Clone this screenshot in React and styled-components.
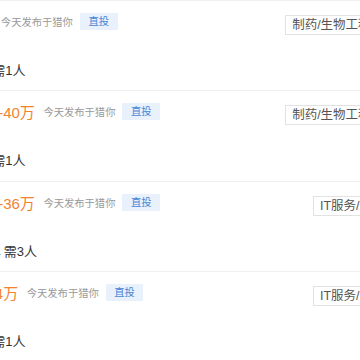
import React from 'react';
import styled, {createGlobalStyle} from 'styled-components';

const GlobalStyle = createGlobalStyle`
    body {
        margin: 0;
        background: #fff;
        overflow: hidden;
        font-family: "Liberation Sans", "Noto Sans CJK SC", sans-serif;
    }
`;

// the list is scrolled sideways: its left part lies off screen
const JobList = styled.div`
    width: 489px;
    margin-left: -31px;
`;

const JobRow = styled.div`
    box-sizing: border-box;
    height: 90.33px;
    display: flex;
    justify-content: space-between;
    align-items: flex-start;
    padding-top: 12px;
    border-top: 1px solid #efefef;
`;

const JobMain = styled.div`
    display: flex;
    flex-direction: column;
`;

const TopLine = styled.div`
    display: flex;
    align-items: center;
    height: 17px;
`;

const Salary = styled.span`
    font-size: 15px;
    color: #f3832f;
    white-space: nowrap;
`;

const Meta = styled.span`
    margin-left: 8.5px;
    font-size: 10.3px;
    color: #999;
    white-space: nowrap;
`;

const DirectTag = styled.span`
    margin-left: 7px;
    height: 17px;
    line-height: 17px;
    padding: 0 8.5px;
    font-size: 10.3px;
    color: #4a85d6;
    background-color: #e8f1fc;
`;

const Requirements = styled.div`
    display: flex;
    gap: 3px;
    margin-top: 32px;
    font-size: 13px;
    line-height: 18px;
    color: #333;
    white-space: nowrap;
`;

const CompanyTags = styled.div`
    display: flex;
    gap: 8px;
    margin-top: 2px;
`;

const CompanyTag = styled.span`
    padding: 0 6px;
    font-size: 12.5px;
    line-height: 18px;
    color: #555;
    border: 1px solid #e2e2e2;
    white-space: nowrap;
`;

const jobs = [
    {salary: '6万', exp: '1年', count: 1, industry: '制药/生物工程', scale: '100-499人'},
    {salary: '22.5-40万', exp: '3年', count: 1, industry: '制药/生物工程', scale: '100-499人'},
    {salary: '22.5-36万', exp: '5-8年', count: 3, industry: 'IT服务/外包', scale: '50-99人'},
    {salary: '3.5-4万', exp: '2年', count: 1, industry: 'IT服务/外包', scale: '50-99人'},
];

const App = () => {
    return (
        <>
            <GlobalStyle/>
            <JobList>
                {jobs.map((job, i) => (
                    <JobRow key={i}>
                        <JobMain>
                            <TopLine>
                                <Salary>{job.salary}</Salary>
                                <Meta>今天发布于猎你</Meta>
                                <DirectTag>直投</DirectTag>
                            </TopLine>
                            <Requirements>
                                <span>{job.exp}</span>
                                <span>需{job.count}人</span>
                            </Requirements>
                        </JobMain>
                        <CompanyTags>
                            <CompanyTag>{job.industry}</CompanyTag>
                            <CompanyTag>{job.scale}</CompanyTag>
                        </CompanyTags>
                    </JobRow>
                ))}
            </JobList>
        </>
    );
};

export default App;
